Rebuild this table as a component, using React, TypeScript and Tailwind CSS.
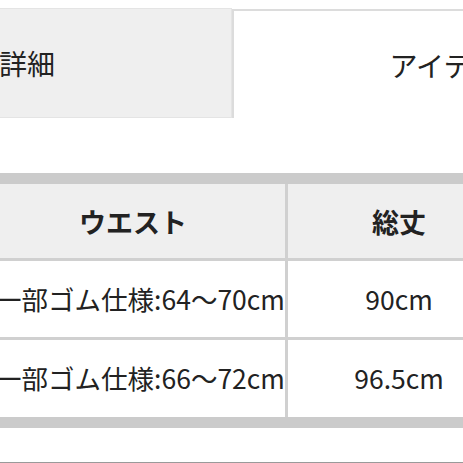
import React from "react";

export default function App() {
  const font = { fontFamily: '"Noto Sans CJK JP", "Noto Sans", sans-serif' };
  return (
    <div
      className="w-[463px] h-[463px] overflow-hidden bg-white text-[#222222] relative"
      style={font}
    >
      {/* tabs */}
      <div className="flex ml-[-234px] w-[932px] mt-[8px] h-[110px]">
        <div className="w-[466px] h-[110px] bg-[#efefef] border border-[#e4e4e4] flex items-center justify-center text-[28px] leading-none">
          商品詳細
        </div>
        <div className="w-[466px] h-[109px] mt-[1px] bg-white border-t-2 border-l-2 border-[#dcdcdc] flex items-center justify-center pl-[12px] text-[28px] leading-none">
          アイテム情報
        </div>
      </div>

      {/* table */}
      <div className="mt-[55px] ml-[-19px] w-[529px] grid grid-cols-[304px_222px] gap-[3px] bg-[#d0d0d0] border-y-[11px] border-[#cbcbcb]">
        <div className="h-[74px] bg-[#efefef] flex items-center justify-center text-[27px] font-bold leading-none">
          ウエスト
        </div>
        <div className="h-[74px] bg-[#efefef] flex items-center justify-center text-[27px] font-bold leading-none">
          総丈
        </div>
        <div className="h-[76px] bg-white flex items-center justify-center pl-[14px] text-[26.5px] leading-none whitespace-nowrap">
          一部ゴム仕様:64〜70cm
        </div>
        <div className="h-[76px] bg-white flex items-center justify-center text-[26.5px] leading-none">
          90cm
        </div>
        <div className="h-[77px] bg-white flex items-center justify-center pl-[14px] text-[26.5px] leading-none whitespace-nowrap">
          一部ゴム仕様:66〜72cm
        </div>
        <div className="h-[77px] bg-white flex items-center justify-center text-[26.5px] leading-none">
          96.5cm
        </div>
      </div>

      <div className="absolute left-0 right-0 top-[462px] h-[1px] bg-[#9a9a9a]" />
    </div>
  );
}
